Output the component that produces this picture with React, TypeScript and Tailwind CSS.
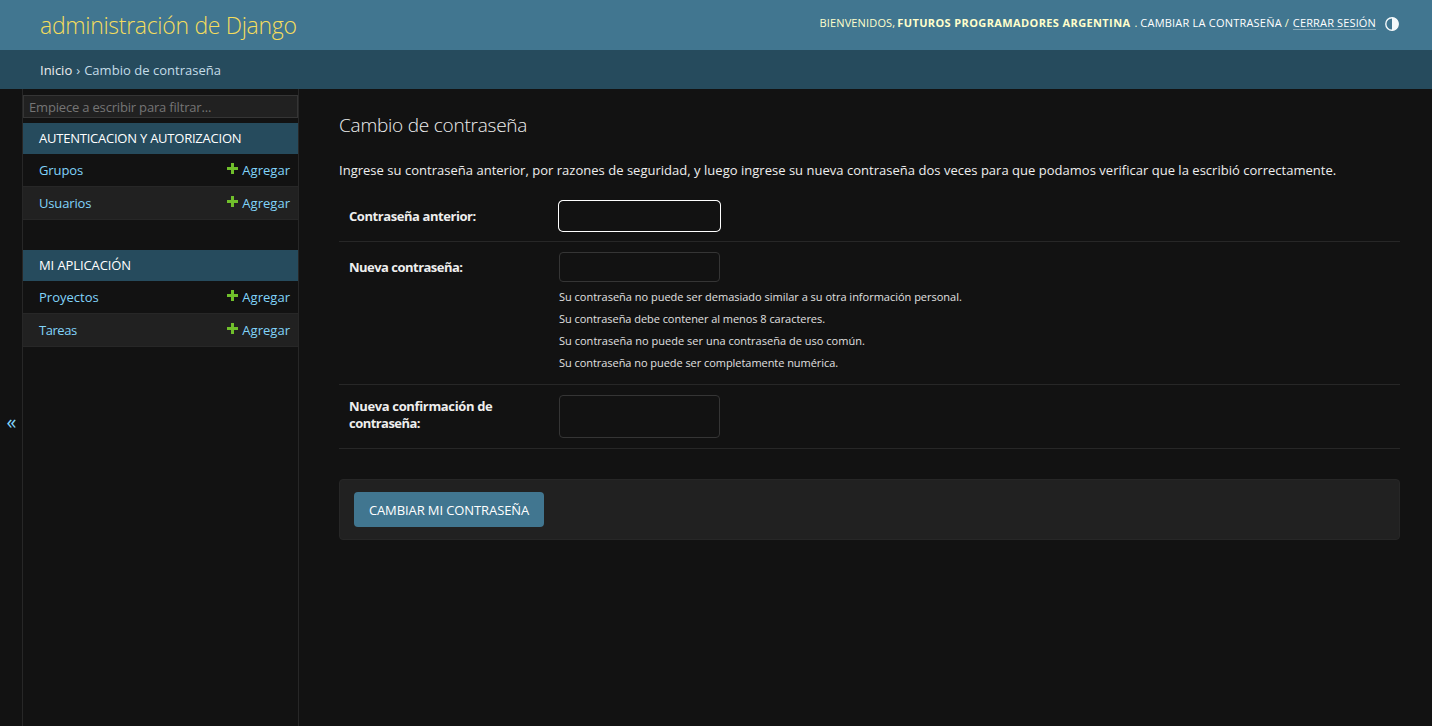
import React from "react";

const PlusIcon = () => (
  <svg width="13" height="13" viewBox="0 0 13 13" className="mt-[-5px] mr-[3px] shrink-0">
    <path d="M5 1h3v4h4v3H8v4H5V8H1V5h4z" fill="#70bf2b" />
  </svg>
);

const ContrastIcon = () => (
  <svg width="14" height="14" viewBox="0 0 14 14">
    <circle cx="7" cy="7" r="6.2" fill="none" stroke="#f4f9fb" strokeWidth="1.4" />
    <path d="M7 0.5a6.5 6.5 0 0 1 0 13z" fill="#f4f9fb" />
  </svg>
);

type Item = { name: string; style: string };

function AppModule({ title, titleClass, items }: { title: string; titleClass: string; items: Item[] }) {
  return (
    <section className="mb-[30px]">
      <h2 className="flex h-[31px] items-center bg-[#264b5d] pl-4 text-[13px] text-white">
        <span className={titleClass}>{title}</span>
      </h2>
      {items.map((item, i) => (
        <div
          key={item.name}
          className={
            "flex h-[33px] items-center justify-between border-b border-[#272727] pt-0.5 pr-2 pl-4 text-[13px] text-[#81d4fa] " +
            (i % 2 ? "bg-[#212121]" : "bg-[#121212]")
          }
        >
          <a className={item.style}>{item.name}</a>
          <a className="flex items-center">
            <PlusIcon />
            <span className="tracking-[0.02px]">Agregar</span>
          </a>
        </div>
      ))}
    </section>
  );
}

export default function App() {
  return (
    <div className="flex h-[726px] w-[1432px] flex-col overflow-hidden bg-[#121212] font-['Open_Sans','Noto_Sans',sans-serif] text-[13px] whitespace-nowrap text-[#eeeeee]">
      <header className="flex h-[50px] shrink-0 items-center justify-between bg-[#417690] pr-[33px] pl-10">
        <h1 className="text-[23px] font-light tracking-[-0.3px] text-[#f5dd5d]">administración de Django</h1>
        <div className="flex items-center pb-1 text-[11px] text-[#ffffcc]">
          <span className="mr-0.5 tracking-[0.15px]">BIENVENIDOS,</span>
          <strong className="mr-1 font-bold tracking-[0.38px]">FUTUROS PROGRAMADORES ARGENTINA</strong>
          <span className="mr-[3px]">.</span>
          <a className="tracking-[0.21px] text-white">CAMBIAR LA CONTRASEÑA</a>
          <span className="mr-1 ml-[3px]">/</span>
          <a className="h-[14px] border-b border-[#85a7b7] leading-[14px] tracking-[0.14px] text-white">CERRAR SESIÓN</a>
          <span className="mt-0.5 ml-[9px]">
            <ContrastIcon />
          </span>
        </div>
      </header>

      <nav className="flex h-[39px] shrink-0 items-center gap-1 bg-[#264b5d] pt-0.5 pl-10 text-[13px] text-[#c4dce8]">
        <a className="text-[#eeeeee]">Inicio</a>
        <span>›</span>
        <span className="tracking-[0.03px]">Cambio de contraseña</span>
      </nav>

      <div className="flex min-h-0 grow">
        <button className="flex w-[23px] shrink-0 items-center justify-center border-r border-[#272727] pt-7 pl-px text-[20px] font-medium text-[#81d4fa]">
          «
        </button>
        <aside className="w-[276px] shrink-0 border-r border-[#272727] pt-1.5">
          <input
            placeholder="Empiece a escribir para filtrar..."
            className="mb-[5px] block h-[23px] w-[275px] border border-[#353535] bg-[#212121] px-[5px] text-[13px] tracking-[-0.18px] outline-none placeholder:text-[#757575]"
          />
          <AppModule
            title="AUTENTICACION Y AUTORIZACION"
            titleClass="tracking-[-0.23px]"
            items={[
              { name: "Grupos", style: "tracking-[-0.1px]" },
              { name: "Usuarios", style: "tracking-[-0.15px]" },
            ]}
          />
          <AppModule
            title="MI APLICACIÓN"
            titleClass="tracking-[-0.1px]"
            items={[
              { name: "Proyectos", style: "tracking-[0px]" },
              { name: "Tareas", style: "tracking-[-0.45px]" },
            ]}
          />
        </aside>

        <main className="flex grow flex-col pt-[24px] pr-8 pl-10">
          <h1 className="h-6 text-[19px] leading-6 font-light tracking-[-0.23px]">Cambio de contraseña</h1>
          <p className="mt-[23px] h-5 text-[13px] leading-5 tracking-[0.02px]">
            Ingrese su contraseña anterior, por razones de seguridad, y luego ingrese su nueva contraseña dos veces para
            que podamos verificar que la escribió correctamente.
          </p>

          <div className="mt-[11px] flex h-[51px] border-b border-[#272727] p-2.5">
            <label className="w-[210px] pt-[7px] text-[13px] leading-[17px] font-bold tracking-[-0.43px]">
              Contraseña anterior:
            </label>
            <input className="h-[30px] w-[161px] rounded-[4px] border border-[#121212] bg-[#121212] shadow-[0_0_0_1px_#ffffff] outline-none" />
          </div>
          <div className="flex h-[143px] border-b border-[#272727] p-2.5">
            <label className="w-[210px] pt-[7px] text-[13px] leading-[17px] font-bold tracking-[-0.52px]">
              Nueva contraseña:
            </label>
            <div>
              <input className="block h-[30px] w-[161px] rounded-[4px] border border-[#353535] bg-[#121212] outline-none" />
              <ul className="mt-1 text-[11px] leading-[22px] text-[#e0e0e0]">
                <li className="tracking-[-0.01px]">
                  Su contraseña no puede ser demasiado similar a su otra información personal.
                </li>
                <li className="tracking-[-0.05px]">Su contraseña debe contener al menos 8 caracteres.</li>
                <li className="tracking-[0.02px]">Su contraseña no puede ser una contraseña de uso común.</li>
                <li className="tracking-[-0.05px]">Su contraseña no puede ser completamente numérica.</li>
              </ul>
            </div>
          </div>
          <div className="flex h-[64px] border-b border-[#272727] p-2.5">
            <label className="w-[210px] pt-[3px] text-[13px] leading-[17px] font-bold">
              <span className="tracking-[-0.35px]">Nueva confirmación de</span>
              <br />
              <span className="tracking-[-0.55px]">contraseña:</span>
            </label>
            <input className="h-[43px] w-[161px] rounded-[4px] border border-[#353535] bg-[#121212] outline-none" />
          </div>

          <div className="mt-[30px] flex h-[61px] items-center rounded-[4px] border border-[#272727] bg-[#212121] px-3.5">
            <button className="h-[35px] w-[190px] rounded-[4px] bg-[#417690] pt-0.5 text-[13px] tracking-[-0.1px] text-white">
              CAMBIAR MI CONTRASEÑA
            </button>
          </div>
        </main>
      </div>
    </div>
  );
}
